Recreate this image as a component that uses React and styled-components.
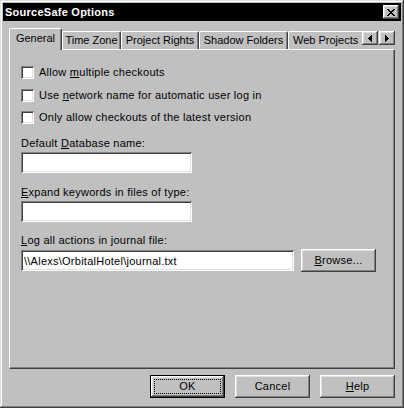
import React from "react";
import styled, { createGlobalStyle, css } from "styled-components";

const GlobalStyle = createGlobalStyle`
  html, body { margin: 0; padding: 0; background: #c0c0c0; }
  body {
    font-family: "Liberation Sans", Arial, sans-serif;
    font-size: 11px;
    letter-spacing: 0.25px;
    color: #000;
  }
  * { box-sizing: border-box; }
`;

const raised = css`
  background: #c0c0c0;
  box-shadow: inset -1px -1px #404040, inset 1px 1px #fff,
    inset -2px -2px #808080, inset 2px 2px #dfdfdf;
`;

const sunken = css`
  background: #fff;
  box-shadow: inset 1px 1px #808080, inset -1px -1px #fff,
    inset 2px 2px #404040, inset -2px -2px #dfdfdf;
`;

const Window = styled.div`
  width: 404px;
  height: 408px;
  padding: 3px;
  background: #c0c0c0;
  box-shadow: inset -1px -1px #404040, inset 1px 1px #dfdfdf,
    inset -2px -2px #808080, inset 2px 2px #fff;
  display: flex;
  flex-direction: column;
`;

const TitleBar = styled.div`
  height: 18px;
  background: #000;
  color: #fff;
  display: flex;
  align-items: center;
  justify-content: space-between;
  padding: 0 2px;
`;

const Title = styled.span`
  font-weight: bold;
  font-size: 11px;
  letter-spacing: 0.25px;
  line-height: 13px;
`;

const SmallButton = styled.div`
  ${raised};
  width: 16px;
  height: 14px;
  display: flex;
  align-items: center;
  justify-content: center;
`;

const Body = styled.div`
  padding: 7px 6px 0;
  display: flex;
  flex-direction: column;
`;

const TabRow = styled.div`
  display: flex;
  align-items: flex-start;
  height: 22px;
  margin-bottom: -1px;
  position: relative;
  z-index: 1;
`;

const Tabs = styled.div`
  flex: 1;
  height: 22px;
  display: flex;
  align-items: flex-end;
  overflow: hidden;
`;

const Tab = styled.div`
  flex: 0 0 auto;
  width: ${(p) => p.$w}px;
  height: ${(p) => (p.$active ? 22 : 18)}px;
  margin-bottom: ${(p) => (p.$active ? 0 : 1)}px;
  padding-top: ${(p) => (p.$active ? 3 : 2)}px;
  padding-left: ${(p) => p.$pl || 0}px;
  background: #c0c0c0;
  border-top: 1px solid #fff;
  border-left: 1px solid #fff;
  border-right: 1px solid #404040;
  border-radius: 2px 2px 0 0;
  box-shadow: inset -1px 0 #808080;
  text-align: ${(p) => (p.$pl ? "left" : "center")};
  letter-spacing: 0;
  line-height: 13px;
  white-space: nowrap;
`;

const Arrows = styled.div`
  display: flex;
  gap: 1px;
  margin-top: 3px;
`;

const Panel = styled.div`
  height: 320px;
  border: 1px solid;
  border-color: #fff #404040 #404040 #fff;
  box-shadow: inset -1px -1px #808080;
  padding: 16px 11px 0;
  display: flex;
  flex-direction: column;
`;

const CheckRow = styled.div`
  display: flex;
  align-items: center;
  height: 13px;
  margin-bottom: ${(p) => p.$mb}px;
`;

const Box = styled.span`
  ${sunken};
  width: 13px;
  height: 13px;
  flex: 0 0 auto;
`;

const CheckText = styled.span`
  margin-left: 5px;
  line-height: 13px;
  white-space: nowrap;
`;

const Key = styled.u`
  text-decoration: underline;
`;

const Field = styled.div`
  display: flex;
  flex-direction: column;
  margin-bottom: ${(p) => p.$mb || 0}px;
`;

const FieldLabel = styled.div`
  line-height: 13px;
  margin-bottom: 2px;
  white-space: nowrap;
`;

const Edit = styled.input`
  ${sunken};
  width: ${(p) => p.$w}px;
  height: 21px;
  border: none;
  outline: none;
  margin: 0;
  padding: 0 3px;
  font: inherit;
  font-size: 11px;
  letter-spacing: 0.25px;
  line-height: 13px;
  color: #000;
`;

const InlineRow = styled.div`
  display: flex;
  align-items: center;
  gap: 7px;
`;

const Button = styled.div`
  ${raised};
  position: relative;
  width: 75px;
  height: 23px;
  display: flex;
  align-items: center;
  justify-content: center;
  line-height: 13px;
  ${(p) =>
    p.$default &&
    css`
      border: 1px solid #000;
      &::after {
        content: "";
        position: absolute;
        inset: 3px;
        border: 1px dotted #000;
      }
    `}
`;

const Footer = styled.div`
  display: flex;
  justify-content: flex-end;
  gap: 10px;
  margin-top: 6px;
`;

const CloseGlyph = () => (
  <svg width="8" height="7" viewBox="0 0 8 7" shapeRendering="crispEdges">
    <path
      d="M0 0h2v1H0zM6 0h2v1H6zM1 1h2v1H1zM5 1h2v1H5zM2 2h4v1H2zM3 3h2v1H3zM2 4h4v1H2zM1 5h2v1H1zM5 5h2v1H5zM0 6h2v1H0zM6 6h2v1H6z"
      fill="#000"
    />
  </svg>
);

const LeftGlyph = () => (
  <svg width="4" height="7" viewBox="0 0 4 7" shapeRendering="crispEdges">
    <path d="M3 0h1v7H3zM2 1h1v5H2zM1 2h1v3H1zM0 3h1v1H0z" fill="#000" />
  </svg>
);

const RightGlyph = () => (
  <svg width="4" height="7" viewBox="0 0 4 7" shapeRendering="crispEdges">
    <path d="M0 0h1v7H0zM1 1h1v5H1zM2 2h1v3H2zM3 3h1v1H3z" fill="#000" />
  </svg>
);

const tabs = [
  { label: "General", w: 53, active: true },
  { label: "Time Zone", w: 59 },
  { label: "Project Rights", w: 78 },
  { label: "Shadow Folders", w: 89 },
  { label: "Web Projects", w: 90, pl: 4 },
];

export default function App() {
  return (
    <>
      <GlobalStyle />
      <Window>
        <TitleBar>
          <Title>SourceSafe Options</Title>
          <SmallButton>
            <CloseGlyph />
          </SmallButton>
        </TitleBar>
        <Body>
          <TabRow>
            <Tabs>
              {tabs.map((t) => (
                <Tab key={t.label} $w={t.w} $active={t.active} $pl={t.pl}>
                  {t.label}
                </Tab>
              ))}
            </Tabs>
            <Arrows>
              <SmallButton>
                <LeftGlyph />
              </SmallButton>
              <SmallButton>
                <RightGlyph />
              </SmallButton>
            </Arrows>
          </TabRow>
          <Panel>
            <CheckRow $mb={10}>
              <Box />
              <CheckText>
                Allow <Key>m</Key>ultiple checkouts
              </CheckText>
            </CheckRow>
            <CheckRow $mb={9}>
              <Box />
              <CheckText>
                Use <Key>n</Key>etwork name for automatic user log in
              </CheckText>
            </CheckRow>
            <CheckRow $mb={13}>
              <Box />
              <CheckText>Only allow checkouts of the latest version</CheckText>
            </CheckRow>
            <Field $mb={13}>
              <FieldLabel>
                Default <Key>D</Key>atabase name:
              </FieldLabel>
              <Edit $w={171} readOnly value="" />
            </Field>
            <Field $mb={12}>
              <FieldLabel>
                <Key>E</Key>xpand keywords in files of type:
              </FieldLabel>
              <Edit $w={171} readOnly value="" />
            </Field>
            <Field>
              <FieldLabel>
                <Key>L</Key>og all actions in journal file:
              </FieldLabel>
              <InlineRow>
                <Edit
                  $w={273}
                  readOnly
                  value={"\\\\Alexs\\OrbitalHotel\\journal.txt"}
                />
                <Button>
                  <span>
                    <Key>B</Key>rowse...
                  </span>
                </Button>
              </InlineRow>
            </Field>
          </Panel>
          <Footer>
            <Button $default>OK</Button>
            <Button>Cancel</Button>
            <Button>
              <span>
                <Key>H</Key>elp
              </span>
            </Button>
          </Footer>
        </Body>
      </Window>
    </>
  );
}
